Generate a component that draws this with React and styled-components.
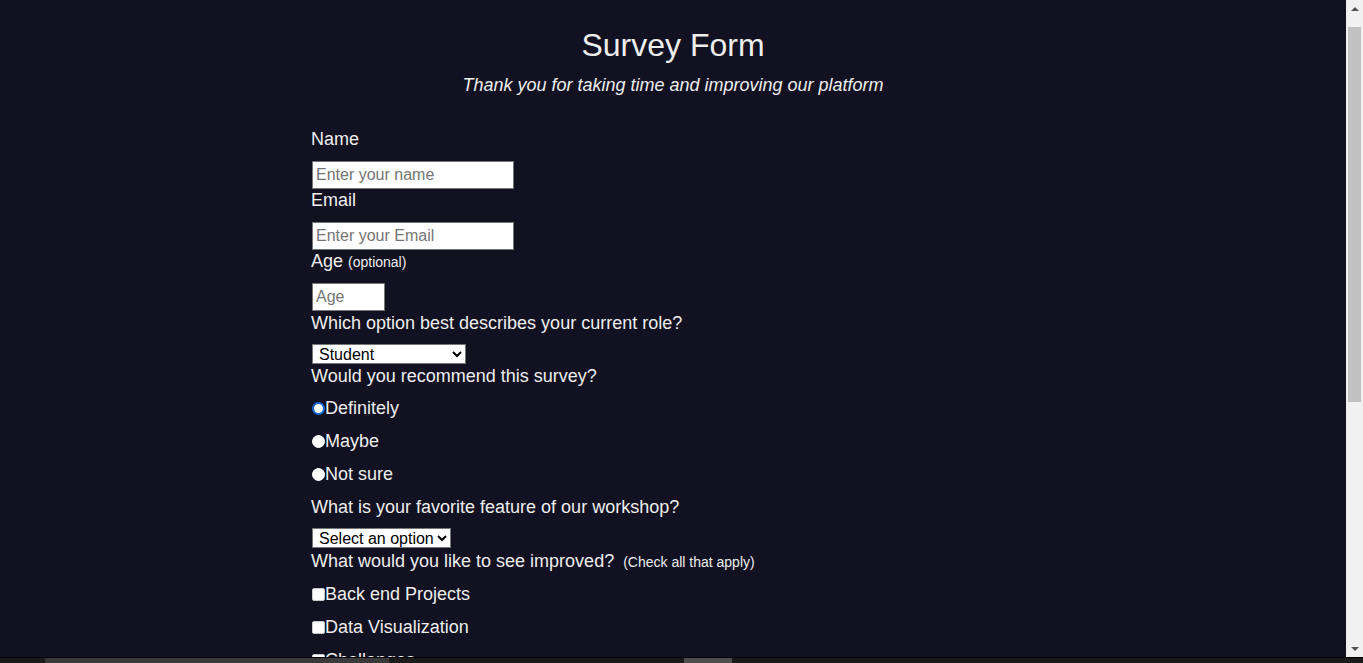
import React from "react";
import styled, { createGlobalStyle } from "styled-components";

const GlobalStyle = createGlobalStyle`
  html, body {
    margin: 0;
    padding: 0;
    background: #111121;
    overflow: hidden;
  }
  body {
    font-family: "Liberation Sans", Arial, sans-serif;
    color: #eeeeee;
  }
`;

const Window = styled.div`
  display: flex;
  height: 657px;
`;

const Viewport = styled.main`
  flex: 1;
  overflow: hidden;
`;

const ScrollBar = styled.div`
  width: 17px;
  display: flex;
  flex-direction: column;
  background: #f1f1f1;
`;

const ScrollButton = styled.div`
  height: 17px;
  display: flex;
  align-items: center;
  justify-content: center;
  svg {
    display: block;
  }
`;

const Track = styled.div`
  flex: 1;
  padding: 10px 2px 0;
`;

const Thumb = styled.div`
  height: 375px;
  background: #c1c1c1;
`;

const Page = styled.div`
  padding-top: 27px;
  padding-bottom: 60px;
`;

const Header = styled.header`
  text-align: center;
`;

const Title = styled.h1`
  margin: 0;
  font-size: 32px;
  font-weight: 400;
  line-height: 37px;
`;

const Description = styled.p`
  margin: 11px 0 0;
  font-size: 18px;
  font-style: italic;
  line-height: 21px;
`;

const Form = styled.form`
  width: 724px;
  margin: 33px auto 0;
  display: flex;
  flex-direction: column;
  align-items: flex-start;
`;

const Label = styled.label`
  display: block;
  font-size: 18px;
  line-height: 20.7px;
  margin-bottom: ${(p) => p.$mb ?? 11}px;
`;

const Hint = styled.span`
  font-size: 14px;
  line-height: 1;
  margin-left: ${(p) => p.$gap || 0}px;
`;

const TextInput = styled.input`
  box-sizing: border-box;
  width: ${(p) => p.$width}px;
  height: 28px;
  margin: 0 0 1.5px 1px;
  padding: 1px 3px;
  border: 1px solid #767676;
  background: #fff;
  color: #000;
  font-family: "Liberation Sans", Arial, sans-serif;
  font-size: 16px;
  &::placeholder {
    color: #757575;
  }
`;

const Select = styled.select`
  box-sizing: border-box;
  width: ${(p) => p.$width}px;
  height: 20px;
  margin: 0 0 ${(p) => p.$mb ?? 1.5}px 1px;
  padding: 0 0 0 2px;
  border: 1px solid #767676;
  border-radius: 0;
  background: #fff;
  color: #000;
  font-family: "Liberation Sans", Arial, sans-serif;
  font-size: 16px;
`;

const Choice = styled.label`
  display: flex;
  align-items: center;
  font-size: 18px;
  line-height: 21px;
  margin-bottom: 12px;
`;

const Radio = styled.input.attrs({ type: "radio" })`
  appearance: none;
  box-sizing: border-box;
  width: 13px;
  height: 13px;
  margin: 0 0 0 1px;
  border-radius: 50%;
  background: #fff;
  border: ${(p) => (p.$focus ? "2px solid #1565d8" : "1px solid #ffffff")};
`;

const Checkbox = styled.input.attrs({ type: "checkbox" })`
  appearance: none;
  box-sizing: border-box;
  width: 13px;
  height: 13px;
  margin: 0 0 0 1px;
  border-radius: 2px;
  background: #fff;
  border: 1px solid #c8c8c8;
`;

const TextArea = styled.textarea`
  width: 320px;
  height: 80px;
  margin: 0 0 12px 1px;
  font-family: "Liberation Sans", Arial, sans-serif;
  font-size: 16px;
`;

const Submit = styled.button`
  margin-left: 1px;
  font-size: 16px;
  padding: 4px 16px;
`;

const Taskbar = styled.div`
  box-sizing: border-box;
  height: 6px;
  background: #1b1b1b;
  border-top: 1px solid #000;
  display: flex;
`;

const TaskItem = styled.div`
  margin-left: ${(p) => p.$left}px;
  width: ${(p) => p.$width}px;
  background: ${(p) => p.$color};
`;

const roles = ["Student", "Full Time Job", "Full Time Learner", "Prefer not to say", "Other"];
const features = ["Select an option", "Challenges", "Projects", "Community", "Open Source"];
const improvements = [
  "Back end Projects",
  "Data Visualization",
  "Challenges",
  "Open Source Community",
  "Gitter help rooms",
  "Videos",
];

export default function App() {
  return (
    <>
      <GlobalStyle />
      <Window>
        <Viewport>
          <Page>
            <Header>
              <Title>Survey Form</Title>
              <Description>Thank you for taking time and improving our platform</Description>
            </Header>
            <Form onSubmit={(e) => e.preventDefault()}>
              <Label htmlFor="name">Name</Label>
              <TextInput id="name" $width={202} placeholder="Enter your name" />
              <Label htmlFor="email">Email</Label>
              <TextInput id="email" $width={202} placeholder="Enter your Email" />
              <Label htmlFor="number">
                Age <Hint>(optional)</Hint>
              </Label>
              <TextInput id="number" $width={73} placeholder="Age" />
              <Label htmlFor="role">Which option best describes your current role?</Label>
              <Select id="role" $width={154} defaultValue="Student">
                {roles.map((r) => (
                  <option key={r}>{r}</option>
                ))}
              </Select>
              <Label>Would you recommend this survey?</Label>
              <Choice>
                <Radio name="rec" $focus />
                Definitely
              </Choice>
              <Choice>
                <Radio name="rec" />
                Maybe
              </Choice>
              <Choice>
                <Radio name="rec" />
                Not sure
              </Choice>
              <Label htmlFor="feature">What is your favorite feature of our workshop?</Label>
              <Select id="feature" $width={139} $mb={2.5}>
                {features.map((f) => (
                  <option key={f}>{f}</option>
                ))}
              </Select>
              <Label $mb={13}>
                What would you like to see improved?<Hint $gap={9}>(Check all that apply)</Hint>
              </Label>
              {improvements.map((i) => (
                <Choice key={i}>
                  <Checkbox />
                  {i}
                </Choice>
              ))}
              <Label htmlFor="comments">Any comments or suggestions?</Label>
              <TextArea id="comments" placeholder="Enter your comment here..." />
              <Submit type="submit">Submit</Submit>
            </Form>
          </Page>
        </Viewport>
        <ScrollBar>
          <ScrollButton>
            <svg width="8" height="4" viewBox="0 0 8 4">
              <polygon points="0,4 8,4 4,0" fill="#505050" />
            </svg>
          </ScrollButton>
          <Track>
            <Thumb />
          </Track>
          <ScrollButton>
            <svg width="8" height="4" viewBox="0 0 8 4">
              <polygon points="0,0 8,0 4,4" fill="#505050" />
            </svg>
          </ScrollButton>
        </ScrollBar>
      </Window>
      <Taskbar>
        <TaskItem $left={45} $width={344} $color="#3a3a3a" />
        <TaskItem $left={295} $width={48} $color="#4e4e4e" />
      </Taskbar>
    </>
  );
}
